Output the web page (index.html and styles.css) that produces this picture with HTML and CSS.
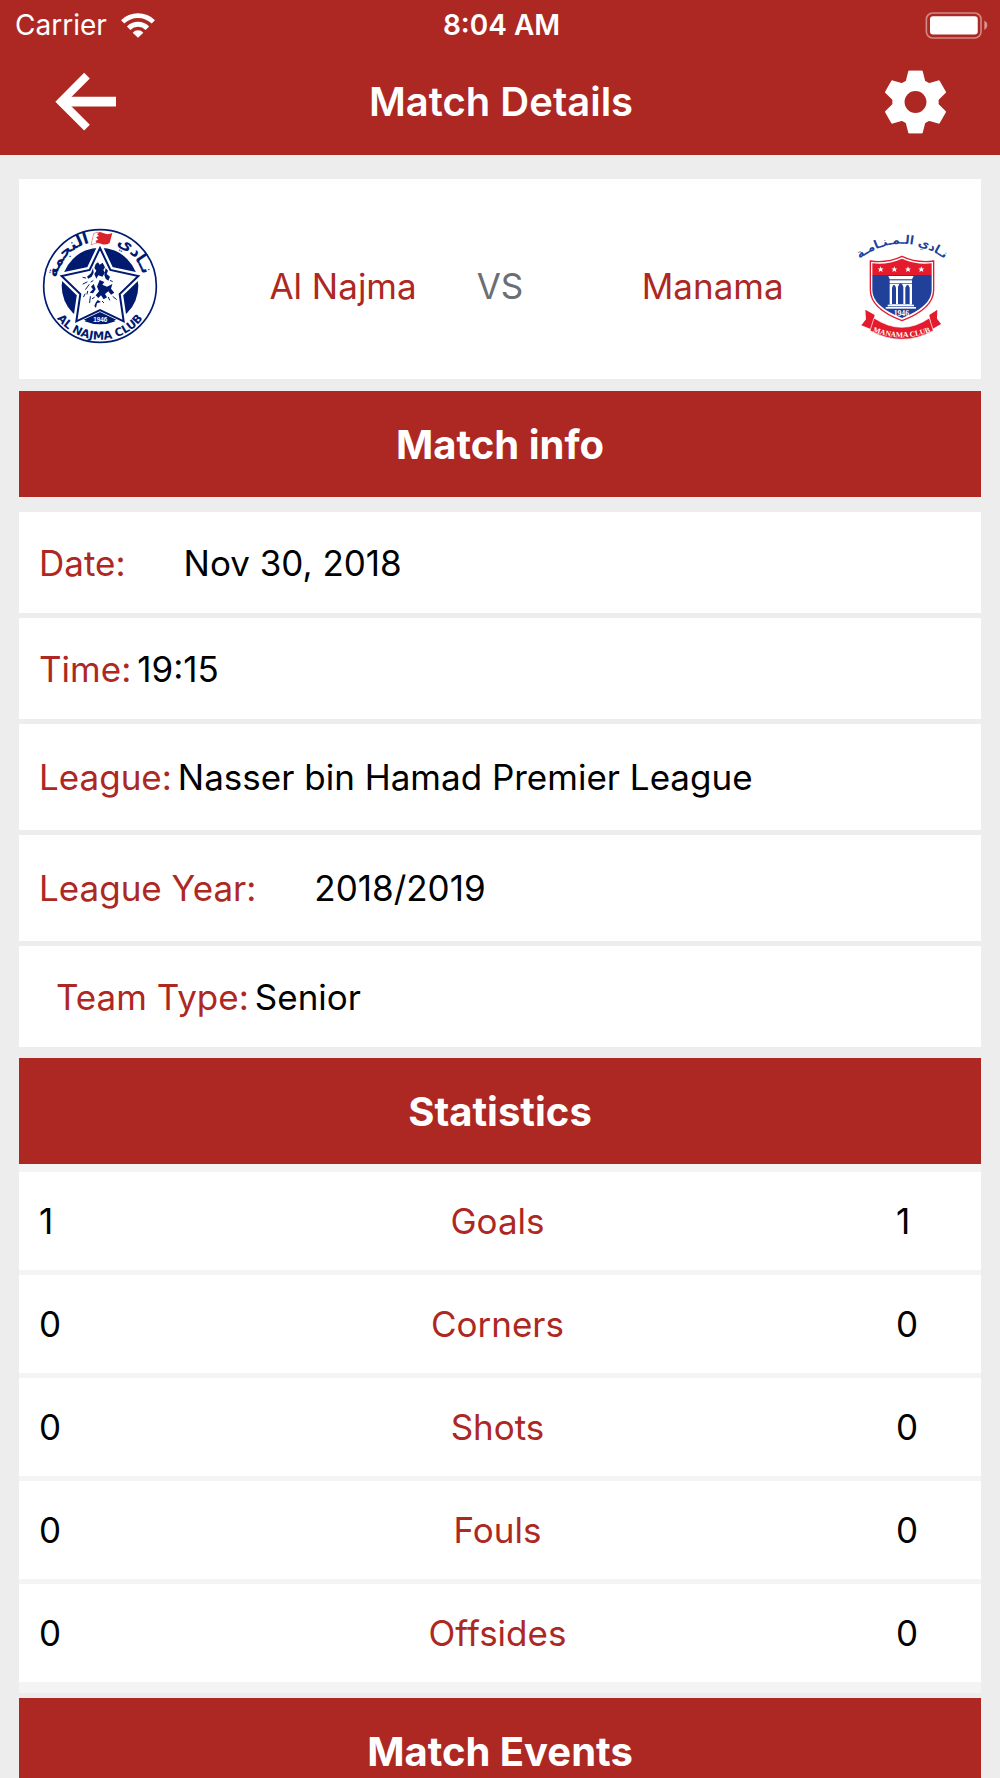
FILE: index.html
```
<!DOCTYPE html>
<html lang="en">
<head>
   <meta charset="UTF-8">
   <meta name="viewport" content="width=device-width, initial-scale=1.0">
   <title>Match Details</title>
   <link rel="stylesheet" href="styles.css">
</head>
<body>
   <header class="header">
      <div class="status-bar">
         <div class="carrier">
            <span>Carrier</span>
            <svg class="wifi" viewBox="362 35 102 75" aria-hidden="true">
               <path d="M367 61.5A66 66 0 0 1 459 61.5" fill="none" stroke="#fff" stroke-width="14"/>
               <path d="M385 80.5A40 40 0 0 1 441 80.5" fill="none" stroke="#fff" stroke-width="15"/>
               <path d="M413 109L397 94A22 22 0 0 1 429 94Z" fill="#fff"/>
            </svg>
         </div>
         <span class="clock">8:04 AM</span>
         <svg class="battery" viewBox="1275 32 189 82" aria-hidden="true">
            <rect x="1278" y="35" width="166" height="76" rx="19" fill="none" stroke="#fff" stroke-opacity="0.45" stroke-width="5"/>
            <rect x="1289" y="45" width="145" height="55" rx="9" fill="#fff"/>
            <path d="M1454 58Q1463 63 1463 72.5Q1463 82 1454 87Z" fill="#fff" fill-opacity="0.5"/>
         </svg>
      </div>
      <nav class="nav-bar">
         <button class="icon-btn" type="button" aria-label="Back">
            <svg class="icon-back" viewBox="165 210 186 183">
               <path d="M261 224L183 302L261 380" fill="none" stroke="#fff" stroke-width="24"/>
               <path d="M190 302H348" stroke="#fff" stroke-width="29"/>
            </svg>
         </button>
         <h1>Match Details</h1>
         <button class="icon-btn" type="button" aria-label="Settings">
            <svg class="icon-gear" viewBox="-95 -96 190 192">
               <defs>
                  <path id="tooth" d="M-30 -60L-22 -92Q-22 -95 -18 -95H18Q22 -95 22 -92L30 -60L30 60L22 92Q22 95 18 95H-18Q-22 95 -22 92L-30 60Z"/>
                  <mask id="hole">
                     <rect x="-95" y="-96" width="190" height="192" fill="#fff"/>
                     <circle r="33" fill="#000"/>
                  </mask>
               </defs>
               <g fill="#fff" mask="url(#hole)">
                  <circle r="70"/>
                  <use href="#tooth"/>
                  <use href="#tooth" transform="rotate(60)"/>
                  <use href="#tooth" transform="rotate(120)"/>
               </g>
            </svg>
         </button>
      </nav>
   </header>

   <main class="content">
      <section class="teams">
         <svg class="crest-home" viewBox="37 38 348 348" role="img" aria-label="Al Najma club crest">
            <defs>
               <path id="najmaTop" d="M79 211A132 132 0 0 1 343 211"/>
               <path id="najmaBottom" d="M49 211A162 162 0 0 0 373 211"/>
            </defs>
            <circle cx="211" cy="212" r="169" fill="#fff" stroke="#001a70" stroke-width="5"/>
            <circle cx="211" cy="212" r="115" fill="#001a70"/>
            <path d="M211 98L242 164L326 182L270 236L282 318L211 284L140 318L152 236L96 182L180 164Z" fill="#fff" stroke="#fff" stroke-width="20"/>
            <path d="M211 98L242 164L326 182L270 236L282 318L211 284L140 318L152 236L96 182L180 164Z" fill="#fff" stroke="#001a70" stroke-width="6"/>
            <path d="M162 313L211 290L260 313Q211 334 162 313Z" fill="#001a70"/>
            <text x="212" y="320" class="najma-year">1946</text>
            <!-- horse sketch -->
            <g fill="#001a70">
               <path d="M198 146L205 141L210 148L219 142L226 156L221 164L226 172L218 184L206 180L200 190L194 176L200 166L194 158Z"/>
               <path d="M228 158L235 166L231 176L241 184L236 196L228 190L224 180Z"/>
               <path d="M190 158L184 174L172 184L176 190L186 184L192 172Z"/>
               <path d="M210 194L224 200L218 208L232 214L248 206L244 220L254 232L244 238L236 228L226 236L232 246L222 252L214 240L206 248L198 240L208 228L202 214Z"/>
               <path d="M192 206L184 214L190 222L180 232L190 234L198 222Z"/>
               <path d="M204 254L214 260L202 264L199 278L194 272L198 262Z"/>
            </g>
            <g fill="none" stroke="#001a70" stroke-linecap="round" stroke-width="3">
               <path d="M168 188L160 186M172 200L160 206M178 208L168 222M166 236L162 244M182 244L180 262M190 196L184 200M242 196L248 198M250 244L260 252M236 246L240 254M218 258L222 262M174 228L172 236M188 250L194 246"/>
            </g>
            <path d="M192 55Q206 46 220 53T248 53L240 83Q228 91 214 85T184 89Z" fill="#d8232a"/>
            <path d="M192 55Q201 49 210 51L203 56L208 62L200 66L206 73L198 77L202 84Q193 84 184 89Z" fill="#fff" stroke="#d8232a" stroke-width="1"/>
            <text class="najma-arabic"><textPath href="#najmaTop" startOffset="24%">النجمة</textPath></text>
            <text class="najma-arabic"><textPath href="#najmaTop" startOffset="77%">نـادي</textPath></text>
            <text class="najma-name"><textPath href="#najmaBottom" startOffset="50%">AL NAJMA CLUB</textPath></text>
         </svg>
         <h2 class="team-home">Al Najma</h2>
         <span class="versus">VS</span>
         <h2 class="team-away">Manama</h2>
         <svg class="crest-away" viewBox="54 51 258 318" role="img" aria-label="Manama club crest">
            <defs>
               <path id="manamaTop" d="M40 142Q186 24 332 142"/>
               <path id="manamaRibbon" d="M90 344Q186 384 280 344"/>
            </defs>
            <text class="manama-arabic"><textPath href="#manamaTop" startOffset="50%">نـادي الـمـنـامـة</textPath></text>
            <path d="M91 135Q142 142 186 121Q230 142 281 135V222Q281 278 186 314Q91 278 91 222Z" fill="#fff" stroke="#e31b2d" stroke-width="4"/>
            <path d="M97 142Q142 148 186 128Q230 148 275 142V177H97Z" fill="#e31b2d"/>
            <path d="M97 177H275V222Q275 271 186 306Q97 271 97 222Z" fill="#20409a"/>
            <g fill="#fff">
               <path id="star" d="M122 151L124.5 157.5H131L126 161.5L128 168L122 164L116 168L118 161.5L113 157.5H119.5Z"/>
               <use href="#star" x="41"/>
               <use href="#star" x="82"/>
               <use href="#star" x="122"/>
               <path d="M145 180H221L216 190H149Z"/>
               <path d="M149 193H216V202H149Z"/>
               <path d="M149 204H216V266H149Z"/>
               <path d="M143 266H222V271H143Z"/>
               <path d="M137 273H228V278H137Z"/>
            </g>
            <g fill="#20409a">
               <path d="M156 264V215Q162 198 168 215V264Z"/>
               <path d="M174 264V212Q182 192 190 212V264Z"/>
               <path d="M196 264V215Q203 198 209 215V264Z"/>
            </g>
            <text x="184" y="299" class="manama-year">1946</text>
            <path d="M76 281L104 297L94 340L64 328L78 310Z" fill="#e31b2d"/>
            <path d="M292 281L268 297L276 340L303 324L291 308Z" fill="#e31b2d"/>
            <path d="M102 306Q186 362 268 306L280 344Q186 396 90 344Z" fill="#e31b2d" stroke="#fff" stroke-width="2"/>
            <text class="manama-name"><textPath href="#manamaRibbon" startOffset="50%">MANAMA CLUB</textPath></text>
         </svg>
      </section>

      <h2 class="section-title">Match info</h2>
      <dl class="info">
         <div class="info-row spaced">
            <dt>Date:</dt>
            <dd>Nov 30, 2018</dd>
         </div>
         <div class="info-row">
            <dt>Time:</dt>
            <dd>19:15</dd>
         </div>
         <div class="info-row tall">
            <dt>League:</dt>
            <dd>Nasser bin Hamad Premier League</dd>
         </div>
         <div class="info-row tall spaced">
            <dt>League Year:</dt>
            <dd>2018/2019</dd>
         </div>
         <div class="info-row indented">
            <dt>Team Type:</dt>
            <dd>Senior</dd>
         </div>
      </dl>

      <h2 class="section-title">Statistics</h2>
      <table class="stats">
         <tbody>
            <tr><td>1</td><th scope="row">Goals</th><td>1</td></tr>
            <tr><td>0</td><th scope="row">Corners</th><td>0</td></tr>
            <tr><td>0</td><th scope="row">Shots</th><td>0</td></tr>
            <tr><td>0</td><th scope="row">Fouls</th><td>0</td></tr>
            <tr><td>0</td><th scope="row">Offsides</th><td>0</td></tr>
         </tbody>
      </table>

      <h2 class="section-title">Match Events</h2>
   </main>
</body>
</html>
```
FILE: styles.css
```
* {
   margin: 0;
   padding: 0;
   box-sizing: border-box;
}

body {
   background-color: #ededed;
   color: #000;
   font-family: Inter, "Liberation Sans", sans-serif;
   font-size: 35px;
   line-height: 44px;
}

svg {
   display: block;
}

/* Header */
.header {
   background-color: #ad2823;
   color: #fff;
}

.status-bar {
   display: grid;
   grid-template-columns: 1fr auto 1fr;
   align-items: center;
   height: 50px;
   padding: 0 12px 0 15px;
   font-size: 28px;
}

.carrier {
   display: flex;
   align-items: center;
   gap: 14px;
}

.wifi {
   width: 34px;
   height: 25px;
}

.clock {
   font-weight: 600;
}

.battery {
   width: 63px;
   height: 27px;
   justify-self: end;
}

.nav-bar {
   display: grid;
   grid-template-columns: 1fr auto 1fr;
   align-items: center;
   height: 105px;
   padding: 0 53px 2px 55px;
}

.nav-bar h1 {
   font-size: 40px;
   font-weight: 600;
}

.icon-btn {
   background: none;
   border: none;
   cursor: pointer;
   justify-self: start;
}

.icon-btn:last-child {
   justify-self: end;
}

.icon-back {
   width: 62px;
   height: 61px;
}

.icon-gear {
   width: 63px;
   height: 64px;
}

/* Content */
.content {
   padding: 24px 19px;
}

/* Teams */
.teams {
   display: grid;
   grid-template-columns: 116px 1fr auto 1fr 102px;
   align-items: center;
   height: 200px;
   padding: 14px 37px 0 23px;
   background-color: #fff;
}

.teams h2 {
   font-size: 35px;
   font-weight: 400;
   color: #ad2823;
}

.team-home {
   text-align: right;
}

.team-away {
   text-align: center;
}

.versus {
   padding: 0 60px;
   color: #6b6e73;
}

.crest-home {
   width: 116px;
   height: 116px;
}

.crest-away {
   width: 86px;
   height: 106px;
   justify-self: end;
   overflow: visible;
}

.najma-name {
   font: bold 34px "DejaVu Sans", sans-serif;
   fill: #001a70;
   text-anchor: middle;
}

.najma-arabic {
   font: bold 49px "DejaVu Sans", sans-serif;
   fill: #001a70;
   text-anchor: middle;
}

.najma-year {
   font: bold 19px "Liberation Sans", sans-serif;
   fill: #fff;
   text-anchor: middle;
}

.manama-arabic {
   font: bold 36px "DejaVu Sans", sans-serif;
   fill: #20409a;
   text-anchor: middle;
}

.manama-year {
   font: bold 23px "Liberation Serif", serif;
   fill: #fff;
   text-anchor: middle;
}

.manama-name {
   font: bold 23px "Liberation Serif", serif;
   fill: #fff;
   text-anchor: middle;
}

/* Section bars */
.section-title {
   height: 106px;
   background-color: #ad2823;
   color: #fff;
   font-size: 40px;
   font-weight: 700;
   line-height: 108px;
   text-align: center;
}

.teams + .section-title {
   margin-top: 12px;
}

/* Match info */
.info {
   display: flex;
   flex-direction: column;
   gap: 5px;
   margin: 15px 0 11px;
}

.info-row {
   display: flex;
   align-items: center;
   gap: 6px;
   height: 101px;
   padding: 0 20px;
   background-color: #fff;
}

.info-row.tall {
   height: 106px;
}

.info-row.spaced {
   gap: 58px;
}

.info-row.indented {
   padding-left: 37px;
}

.info-row dt {
   color: #ad2823;
}

/* Statistics */
.stats {
   width: 100%;
   margin-bottom: 5px;
   padding: 3px 0 6px;
   background-color: #f4f4f4;
   border-spacing: 0 5px;
   table-layout: fixed;
}

.stats td,
.stats th {
   height: 98px;
   background-color: #fff;
   vertical-align: middle;
}

.stats td {
   width: 105px;
   padding-left: 20px;
}

.stats td:first-child {
   width: 100px;
}

.stats th {
   color: #ad2823;
   font-weight: 400;
   text-align: center;
}
```
